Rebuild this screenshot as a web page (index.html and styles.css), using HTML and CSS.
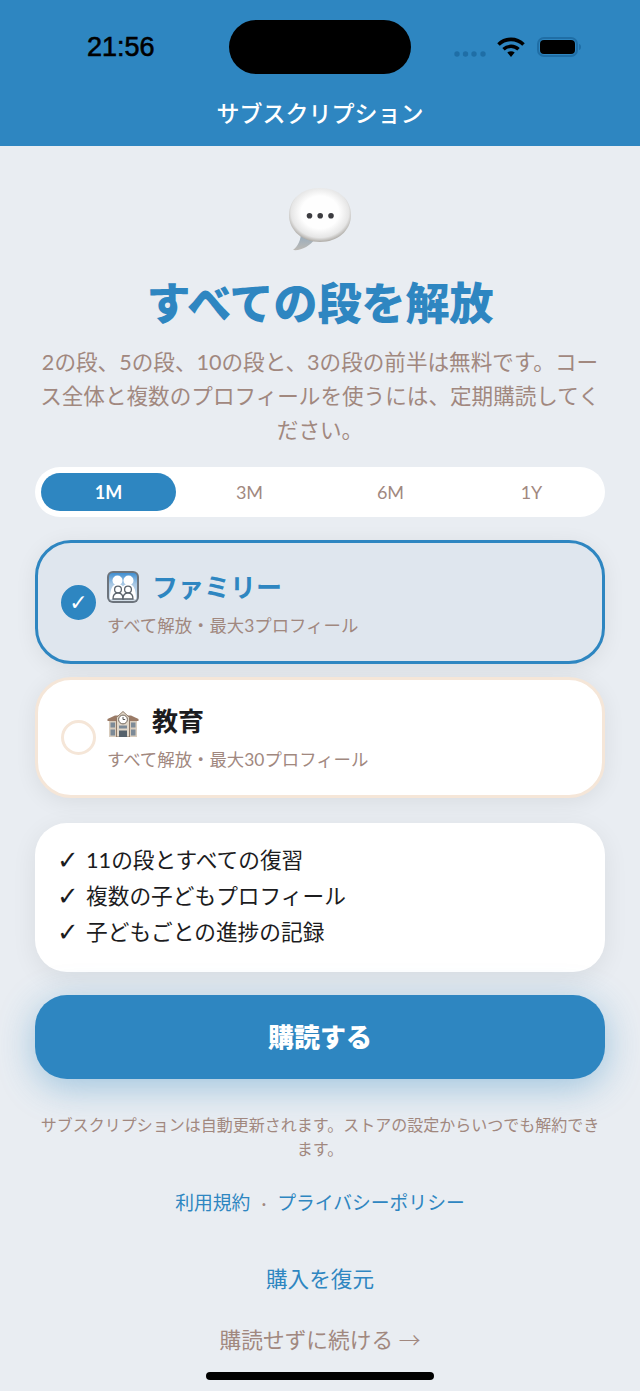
FILE: index.html
```html
<!DOCTYPE html>
<html lang="ja">
<head>
  <meta charset="UTF-8" />
  <meta name="viewport" content="width=device-width, initial-scale=1.0"/>
  <title>サブスクリプション</title>
  <link rel="stylesheet" href="styles.css">
</head>
<body>
  <header class="top">
    <div class="status">
      <span class="clock">21:56</span>
      <div class="island"></div>
      <div class="status-icons">
        <svg class="dots" width="33" height="6" viewBox="0 0 33 6"><g fill="#1f6ea6"><circle cx="3" cy="3" r="2.700"/><circle cx="11.500" cy="3" r="2.700"/><circle cx="20" cy="3" r="2.700"/><circle cx="29" cy="3" r="2.700"/></g></svg>
        <svg class="wifi" width="28" height="20" viewBox="0 0 28 20"><path d="M1.500 7.500C8.500 .6 19.500 .6 26.500 7.500" fill="none" stroke="#000" stroke-width="3.600"/><path d="M6.500 12.300C10.500 8.300 17.500 8.300 21.500 12.300" fill="none" stroke="#000" stroke-width="3.400"/><path d="M10.300 15.400C12.300 13.800 15.700 13.800 17.700 15.400L14 20Z" fill="#000"/></svg>
        <svg class="battery" width="44" height="20" viewBox="0 0 44 20"><rect x="1" y="1" width="39" height="18" rx="6" fill="none" stroke="#1f6ea6" stroke-width="2"/><rect x="3" y="3" width="35" height="14" rx="4" fill="#000"/><path d="M42 7v6c1 0 2-1.200 2-3s-1-3-2-3z" fill="#1f6ea6"/></svg>
      </div>
    </div>
    <h1>サブスクリプション</h1>
  </header>

  <main class="content">
    <!-- Hero -->
    <section class="hero">
      <svg class="bubble" width="66" height="66" viewBox="0 0 66 66">
        <defs>
          <radialGradient id="bubbleFill" cx="50%" cy="45%" r="55%">
            <stop offset="0.55" stop-color="#fefefe"/>
            <stop offset="0.85" stop-color="#e6e6e6"/>
            <stop offset="1" stop-color="#aeaba6"/>
          </radialGradient>
          <linearGradient id="tailFill" x1="0" y1="0" x2="0" y2="1">
            <stop offset="0" stop-color="#8fa9bf"/>
            <stop offset="1" stop-color="#bdbab5"/>
          </linearGradient>
        </defs>
        <path d="M14 46C14 54 11 60 6 64C14 65 23 60 28 53Z" fill="url(#tailFill)"/>
        <path d="M33 2C52 2 64 14 64 29C64 45 50 56 33 56C16 56 2 45 2 29C2 14 14 2 33 2Z" fill="url(#bubbleFill)"/>
        <g fill="#3c3c40"><circle cx="22.500" cy="29.700" r="2.800"/><circle cx="33.200" cy="29.700" r="2.800"/><circle cx="44" cy="29.700" r="2.800"/></g>
      </svg>
      <h2>すべての段を解放</h2>
      <p>2の段、5の段、10の段と、3の段の前半は無料です。コース全体と複数のプロフィールを使うには、定期購読してください。</p>
    </section>

    <!-- Period tabs -->
    <div class="tabs">
      <div class="tab active">1M</div>
      <div class="tab">3M</div>
      <div class="tab">6M</div>
      <div class="tab">1Y</div>
    </div>

    <!-- Plans -->
    <div class="plan selected">
      <div class="radio checked">✓</div>
      <div class="plan-text">
        <div class="plan-title">
          <svg class="plan-icon" width="32" height="32" viewBox="0 0 32 32">
            <defs><linearGradient id="famBg" x1="0" y1="0" x2="0" y2="1"><stop offset="0" stop-color="#3f8fd2"/><stop offset="0.4" stop-color="#a9c8e4"/><stop offset="1" stop-color="#d5dfe8"/></linearGradient></defs>
            <rect x="0" y="0" width="32" height="32" rx="6" fill="#6d747c"/>
            <rect x="2" y="2" width="28" height="28" rx="4" fill="url(#famBg)"/>
            <g fill="#fff"><circle cx="10.500" cy="9.500" r="5"/><circle cx="21.500" cy="9.500" r="5"/><path d="M3 28c0-10 2.500-15 7.500-15 3 0 4.500 1 5.500 2.500 1-1.500 2.500-2.500 5.500-2.500 5 0 7.500 5 7.500 15z"/></g>
            <g fill="#fff" stroke="#5b636b" stroke-width="1.300"><circle cx="11" cy="18.500" r="3.400"/><circle cx="21" cy="18.500" r="3.400"/><path d="M6 28c0-3.800 2-6 5-6s5 2.200 5 6z"/><path d="M16 28c0-3.800 2-6 5-6s5 2.200 5 6z"/></g>
          </svg>
          <span class="plan-name">ファミリー</span>
        </div>
        <div class="plan-sub">すべて解放・最大3プロフィール</div>
      </div>
    </div>

    <div class="plan">
      <div class="radio"></div>
      <div class="plan-text">
        <div class="plan-title">
          <svg class="plan-icon" width="32" height="32" viewBox="0 0 32 32">
            <g transform="translate(0 3.500)">
              <rect x="2" y="10" width="28" height="18.500" fill="#d8ccbd"/>
              <path d="M0.500 10.500L8 7H24L31.500 10.500V12.500H0.500Z" fill="#9a7a66"/>
              <path d="M9.500 9L16 3L22.500 9V28.500H9.500Z" fill="#e2d8ca" stroke="#8f7a68" stroke-width="1"/>
              <circle cx="16" cy="11" r="4.400" fill="#fff" stroke="#6e6459" stroke-width="1"/>
              <path d="M16 8.500V11H18.200" fill="none" stroke="#444" stroke-width="0.900"/>
              <g fill="#7c8a97"><rect x="3.500" y="14" width="4.500" height="5"/><rect x="3.500" y="21" width="4.500" height="6"/><rect x="24" y="14" width="4.500" height="5"/><rect x="24" y="21" width="4.500" height="6"/><rect x="12" y="17" width="8" height="3"/></g>
              <rect x="12" y="22" width="8" height="6.500" fill="#56626c"/>
            </g>
          </svg>
          <span class="plan-name">教育</span>
        </div>
        <div class="plan-sub">すべて解放・最大30プロフィール</div>
      </div>
    </div>

    <!-- Features -->
    <ul class="features">
      <li><span class="tick">✓</span>11の段とすべての復習</li>
      <li><span class="tick">✓</span>複数の子どもプロフィール</li>
      <li><span class="tick">✓</span>子どもごとの進捗の記録</li>
    </ul>

    <button class="subscribe">購読する</button>

    <p class="note">サブスクリプションは自動更新されます。ストアの設定からいつでも解約できます。</p>

    <div class="legal">
      <a>利用規約</a>
      <span class="sep">·</span>
      <a>プライバシーポリシー</a>
    </div>

    <a class="restore">購入を復元</a>
    <a class="skip">購読せずに続ける <span class="arrow">→</span></a>
  </main>

  <div class="home-bar"></div>
</body>
</html>
```

FILE: styles.css
```css
* {
  box-sizing: border-box;
}

html, body {
  margin: 0;
  height: 1391px;
  overflow: hidden;
}

body {
  position: relative;
  font-family: "Lato", "Noto Sans CJK JP", sans-serif;
  background: #e9edf2;
  color: #1c1c1e;
}

.top {
  height: 146px;
  background: #2e86c1;
  position: relative;
}

.status {
  height: 96px;
}

.clock {
  position: absolute;
  left: 87px;
  top: 32px;
  font-family: "Liberation Sans", sans-serif;
  font-size: 27px;
  line-height: 30px;
  color: #000;
  -webkit-text-stroke: 0.6px #000;
}

.island {
  position: absolute;
  left: 229px;
  top: 20px;
  width: 182px;
  height: 54px;
  border-radius: 27px;
  background: #000;
}

.status-icons {
  position: absolute;
  left: 454px;
  top: 37px;
  display: flex;
  align-items: flex-start;
}

.dots {
  margin-top: 14px;
}

.wifi {
  margin-left: 10px;
}

.battery {
  margin-left: 12px;
}

.top h1 {
  margin: 0;
  color: #fff;
  font-size: 23px;
  font-weight: 500;
  line-height: 34px;
  text-align: center;
}

.content {
  padding: 40px 35px 0;
  display: flex;
  flex-direction: column;
}

.hero {
  text-align: center;
}

.bubble {
  display: block;
  margin: 0 auto;
}

.hero h2 {
  margin: 20px 0 0;
  font-size: 44px;
  line-height: 62px;
  font-weight: 900;
  color: #2e86c1;
}

.hero p {
  margin: 11px 0 0;
  font-size: 21.600px;
  line-height: 34px;
  font-weight: 400;
  color: #a1887f;
}

.tabs {
  margin-top: 20px;
  height: 50px;
  padding: 6px;
  display: grid;
  grid-template-columns: repeat(4, 1fr);
  gap: 6px;
  background: #fff;
  border-radius: 25px;
}

.tab {
  display: flex;
  align-items: center;
  justify-content: center;
  font-size: 18px;
  color: #a1887f;
  border-radius: 19px;
}

.tab.active {
  background: #2e86c1;
  color: #fff;
  font-weight: 700;
}

.plan {
  margin-top: 13px;
  height: 121px;
  padding: 0 23px;
  display: flex;
  align-items: center;
  gap: 11px;
  background: #fff;
  border: 3px solid #f5e6d8;
  border-radius: 36px;
  box-shadow: 0 4px 22px rgba(0, 0, 0, 0.07);
}

.plan.selected {
  margin-top: 23px;
  height: 124px;
  background: #dfe6ee;
  border-color: #2e86c1;
}

.radio {
  width: 35px;
  height: 35px;
  flex: none;
  border: 3px solid #f5e6d8;
  border-radius: 50%;
}

.radio.checked {
  display: flex;
  align-items: center;
  justify-content: center;
  background: #2e86c1;
  border-color: #2e86c1;
  color: #fff;
  font-family: "DejaVu Sans", sans-serif;
  font-size: 22px;
}

.plan-text {
  display: flex;
  flex-direction: column;
}

.selected .plan-text {
  padding-top: 2px;
}

.plan-title {
  display: flex;
  align-items: center;
  gap: 13px;
  height: 36px;
}

.plan-name {
  font-size: 26px;
  line-height: 36px;
  font-weight: 700;
}

.selected .plan-name {
  color: #2e86c1;
}

.plan-sub {
  margin-top: 9px;
  font-size: 17.400px;
  line-height: 24px;
  color: #a1887f;
}

.features {
  list-style: none;
  margin: 25px 0 0;
  padding: 19px 22px 22px;
  background: #fff;
  border-radius: 32px;
  box-shadow: 0 6px 26px rgba(0, 0, 0, 0.07);
}

.features li {
  display: flex;
  font-size: 21.700px;
  line-height: 36px;
}

.tick {
  width: 29px;
  flex: none;
  font-family: "DejaVu Sans", sans-serif;
  font-size: 26px;
}

.subscribe {
  margin-top: 23px;
  height: 84px;
  padding-bottom: 4px;
  border: none;
  border-radius: 32px;
  background: #2e86c1;
  color: #fff;
  font-family: inherit;
  font-size: 26px;
  font-weight: 900;
  box-shadow: 0 8px 36px rgba(46, 134, 193, 0.4);
}

.note {
  margin: 34px 0 0;
  font-size: 16px;
  line-height: 24px;
  color: #a1887f;
  text-align: center;
}

.legal {
  margin-top: 27px;
  display: flex;
  justify-content: center;
  align-items: center;
  gap: 11px;
  font-size: 18.800px;
  line-height: 30px;
  color: #2e86c1;
}

.sep {
  color: #a1887f;
}

.restore {
  margin-top: 44px;
  text-align: center;
  font-size: 21.600px;
  line-height: 34px;
  color: #2e86c1;
}

.skip {
  margin-top: 26px;
  text-align: center;
  font-size: 21.700px;
  line-height: 34px;
  color: #a1887f;
}

.arrow {
  font-family: "Noto Sans CJK JP", sans-serif;
  font-weight: 300;
}

.home-bar {
  position: absolute;
  left: 206px;
  top: 1372px;
  width: 228px;
  height: 8px;
  border-radius: 4px;
  background: #000;
}
```
